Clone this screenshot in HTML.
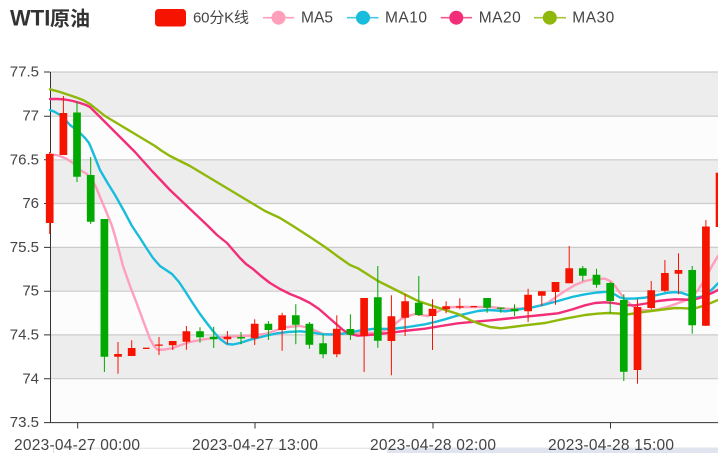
<!DOCTYPE html>
<html><head><meta charset="utf-8"><style>
html,body{margin:0;padding:0;background:#fff}
svg{display:block}
text{font-family:"Liberation Sans","Noto Sans CJK SC",sans-serif;fill:#444;font-size:15.5px}
</style></head><body>
<svg width="718" height="453" viewBox="0 0 718 453" xmlns="http://www.w3.org/2000/svg">
<rect width="718" height="453" fill="#fff"/>
<!-- bands -->
<rect x="50" y="72" width="668" height="351" fill="#fcfcfc"/>
<g fill="#ededed">
<rect x="50" y="72" width="668" height="44.2"/>
<rect x="50" y="159.8" width="668" height="43.8"/>
<rect x="50" y="247.4" width="668" height="43.8"/>
<rect x="50" y="335" width="668" height="43.8"/>
</g>
<path d="M50 72H718M50 116.2H718M50 159.8H718M50 203.5H718M50 247.4H718M50 291.2H718M50 334.9H718M50 378.7H718" stroke="#ccc" stroke-width="1.2" fill="none"/>
<!-- axes -->
<path d="M50.5 72V423M44 422.6H718M44 72H50M44 116.2H50M44 159.8H50M44 203.5H50M44 247.4H50M44 291.2H50M44 334.9H50M44 378.7H50M77.7 423V428.5M255 423V428.5M433 423V428.5M610.5 423V428.5" stroke="#333" stroke-width="1" fill="none"/>
<!-- slider -->
<path d="M53.5 453V448.3H387" stroke="#ddd" stroke-width="1" fill="none"/>
<rect x="387" y="447.5" width="331" height="5.5" fill="#dfe4ee"/>
<!-- lines -->
<g fill="none" stroke-width="2.4" stroke-linejoin="round" stroke-linecap="round">
<polyline stroke="#ff9fbb" points="50,154 58,155.5 65,158 73,163 80,170 87,174 92,180 96,187 100,197 106,211 112,226 117,243 123,266 130,286 137,304 144,323 150,339 154,346 158,350 165,349.5 173,348 181,345 190,342 200,340 213,338 226,337 240,336 254,335.5 267,333.5 274,331 280,329 287,327 300,326 310,328 316,331 323,334 332,334.5 340,333.5 350,333 362,333 373,332.7 382,331.5 390,329 395,324 401,319 407,316.5 415,314 421,315 428,316 436,312.5 445,307.7 455,307 465,307 478,307 491,307 502,308.5 511,309 521,308.5 531,307.7 540,305.5 548,302.7 556,297 565,291 575,285 585,281 595,279 605,278.7 611,281.5 615,286 620,293 625,299.3 632,305.5 641,310 650,310.5 658,309.3 667,307 675,304.3 684,301 691,297.7 698,290 705,279.3 712,266 718,256"/>
<polyline stroke="#18bcdc" points="50,110 55,112 60,115 65,119.5 70,125 78,131 85,138 89,143 92,150 96,160 100,170 107,182 115,195 124,211 132,226 140,238 147,249 153,258 160,266 166,270 172,274 179,282 185,291 192,302 200,314 206,322 213,331 220,339 227,344 233,344.5 240,343 249,340 257,338 267,335.5 277,333.3 288,332 300,331.3 312,332.5 323,334.3 333,334.5 343,333.7 352,332 360,330.5 375,328.7 391,329 408,327 425,324.3 435,322 445,319.3 456,316 468,313.3 478,311 488,310 497,310.5 505,311.3 518,309.5 531,307.7 545,304.5 558,301 572,297 585,294.3 597,292.5 608,291.7 614,294 620,297.5 625,298.7 635,298.5 645,297.7 657,295 668,292.7 675,292.2 681,292.7 688,295 695,297.7 702,296.5 708,292.7 713,288.5 718,283.3"/>
<polyline stroke="#f22e78" points="50,99 58,99 65,99.5 73,101 80,103 86,105 90,107 95,112 100,117 117,134 135,152 152,171 170,190 189,208 208,226 217,235 227,243 233,250 240,258 246,264 253,269 261,276 270,283 280,289 290,294 300,298 310,303 319,309 327,316 335,323 343,330 350,334 358,335.7 375,334.5 391,332.7 408,330.5 425,328.7 441,326 458,323.3 475,321.7 491,320.3 508,318.5 525,316.7 542,315 558,313.3 572,309.5 585,305.3 595,303 605,302.3 613,303 621,304.3 628,305.2 635,305.3 646,303.5 658,301 667,300 675,299.3 683,299.5 691,300 698,298.5 705,296 712,293 718,290"/>
<polyline stroke="#90b80a" points="50,89.3 60,92 75,97 83,100 90,104 95,108 100,112 105,116 120,125 135,134 155,146 162,151 170,156 190,166 210,178 230,190 250,202 265,211 280,218 293,226 310,237 325,247 340,258 350,265 358,268.3 378,281 398,291 418,301 438,307.7 458,314 470,320 478,323.3 490,327 501,328.3 512,327 525,325.3 545,323 565,318.7 585,315 597,313.7 608,313 618,313.5 628,314.3 640,312.5 651,311 663,309.5 675,308 683,308.2 691,308.7 698,307.5 705,305.3 712,302.5 718,300"/>
</g>
<!-- candle wicks -->
<path stroke="#f61400" stroke-width="1" fill="none" d="M49.7 152V234M63.4 96V155M118 342V373.7M131.7 340.3V356M159 337V355M172.7 341V350M186.4 326V349.7M227.4 331V344M254.7 319.3V345M282.1 312.7V350.7M336.8 315.3V357.3M364.1 298V372M391.4 295.3V375.3M405.1 294.3V336M432.5 299.3V350M446.1 301.3V313.3M459.8 298.3V309.3M528.1 288.7V322M541.8 291.3V306M555.5 282V304.7M569.2 246V283.3M637.5 299.3V383.7M651.2 281V309.3M664.9 260V292M678.5 253.3V294.3M705.9 220V326"/>
<path stroke="#00a800" stroke-width="1" fill="none" d="M77 102V182M90.7 157V224M104.4 219V372M200 327.3V342.7M213.7 326.7V348M241 332V344.3M268.4 321V340M295.8 304.3V344.3M309.4 322V348.7M323.1 334.3V358.3M350.4 314.3V340M377.8 266V347.7M418.8 276V316M487.1 298V312.7M500.8 307.7V312.7M514.5 304.3V316M582.8 266V281M596.5 268.7V287.7M610.2 282V313.3M623.8 294.3V381M692.2 266V333.7"/>
<!-- candle bodies -->
<path fill="#f61400" d="M45.85 154h7.7V223h-7.7zM59.55 113h7.7V155h-7.7zM114.15 354h7.7V356.7h-7.7zM127.85 348h7.7V356h-7.7zM143 347.6h6.5V349h-6.5zM155.15 344.5h7.7V345.8h-7.7zM168.85 341h7.7V345.3h-7.7zM182.55 331.3h7.7V341.7h-7.7zM223.55 336.7h7.7V339.3h-7.7zM250.85 323.7h7.7V338.3h-7.7zM278.25 315.3h7.7V330h-7.7zM332.95 328.7h7.7V354.3h-7.7zM360.25 298h7.7V336h-7.7zM387.55 316.3h7.7V341h-7.7zM401.25 301.3h7.7V317.7h-7.7zM428.65 308.7h7.7V316h-7.7zM442.25 306.3h7.7V309.3h-7.7zM455.95 306.3h7.7V307.6h-7.7zM470.5 306h6.5V307.3h-6.5zM524.25 294.7h7.7V311.3h-7.7zM537.95 291.3h7.7V295.7h-7.7zM551.65 282h7.7V292h-7.7zM565.35 268.3h7.7V283.3h-7.7zM633.65 307h7.7V370h-7.7zM647.35 290.3h7.7V308h-7.7zM661.05 273h7.7V290.7h-7.7zM674.65 270h7.7V273.7h-7.7zM702.05 226.5h7.7V325.7h-7.7zM715.7 172.7h3V227h-3z"/>
<path fill="#00a800" d="M73.15 112.5h7.7V176.7h-7.7zM86.85 175h7.7V221.7h-7.7zM100.55 219h7.7V356.7h-7.7zM196.15 331.3h7.7V337.3h-7.7zM209.85 336.7h7.7V339.3h-7.7zM237.15 337h7.7V338.5h-7.7zM264.55 323.7h7.7V330h-7.7zM291.95 315.3h7.7V324.7h-7.7zM305.55 323.7h7.7V344.7h-7.7zM319.25 343.3h7.7V354.3h-7.7zM346.55 329h7.7V334.7h-7.7zM373.95 297.3h7.7V340.7h-7.7zM414.95 302.7h7.7V315h-7.7zM483.25 298h7.7V307.7h-7.7zM496.95 307.5h7.7V308.8h-7.7zM510.65 308.7h7.7V311.3h-7.7zM578.95 268.3h7.7V275.7h-7.7zM592.65 274.7h7.7V284.7h-7.7zM606.35 283h7.7V301h-7.7zM619.95 300h7.7V371.7h-7.7zM688.35 270h7.7V325.3h-7.7z"/>
<!-- y labels -->
<g text-anchor="end">
<text x="39" y="76.5" style="font-size:15px">77.5</text>
<text x="39" y="120.5" style="font-size:15px">77</text>
<text x="39" y="164.5" style="font-size:15px">76.5</text>
<text x="39" y="208" style="font-size:15px">76</text>
<text x="39" y="252" style="font-size:15px">75.5</text>
<text x="39" y="295.5" style="font-size:15px">75</text>
<text x="39" y="339.5" style="font-size:15px">74.5</text>
<text x="39" y="383.5" style="font-size:15px">74</text>
<text x="39" y="427" style="font-size:15px">73.5</text>
</g>
<!-- x labels -->
<text x="14" y="450" textLength="126">2023-04-27 00:00</text>
<text x="192" y="450" textLength="126">2023-04-27 13:00</text>
<text x="370" y="450" textLength="126">2023-04-28 02:00</text>
<text x="548" y="450" textLength="126">2023-04-28 15:00</text>
<!-- title -->
<text x="10" y="25.5" style="font-size:22px;font-weight:bold;fill:#333">WTI</text>
<text x="50" y="25.5" style="font-size:20px;font-weight:bold;fill:#333">原油</text>
<!-- legend -->
<rect x="155" y="9" width="31" height="17.5" rx="3.5" fill="#f61400"/>
<text x="193" y="22.5" style="font-size:15px" textLength="56">60分K线</text>
<path d="M263 17.7H294" stroke="#ff9fbb" stroke-width="1.6"/><circle cx="278.5" cy="17.7" r="7" fill="#ff9fbb"/>
<text x="301" y="22.5" textLength="32">MA5</text>
<path d="M347 17.7H378.5" stroke="#18bcdc" stroke-width="1.6" stroke-opacity=".8"/><circle cx="363" cy="17.7" r="7" fill="#18bcdc"/>
<text x="385" y="22.5" textLength="42">MA10</text>
<path d="M440.7 17.7H472" stroke="#f22e78" stroke-width="1.6" stroke-opacity=".8"/><circle cx="456.3" cy="17.7" r="7" fill="#f22e78"/>
<text x="478.7" y="22.5" textLength="42">MA20</text>
<path d="M534 17.7H566" stroke="#90b80a" stroke-width="1.6" stroke-opacity=".8"/><circle cx="549.8" cy="17.7" r="7" fill="#90b80a"/>
<text x="572.3" y="22.5" textLength="42">MA30</text>
</svg>
</body></html>
